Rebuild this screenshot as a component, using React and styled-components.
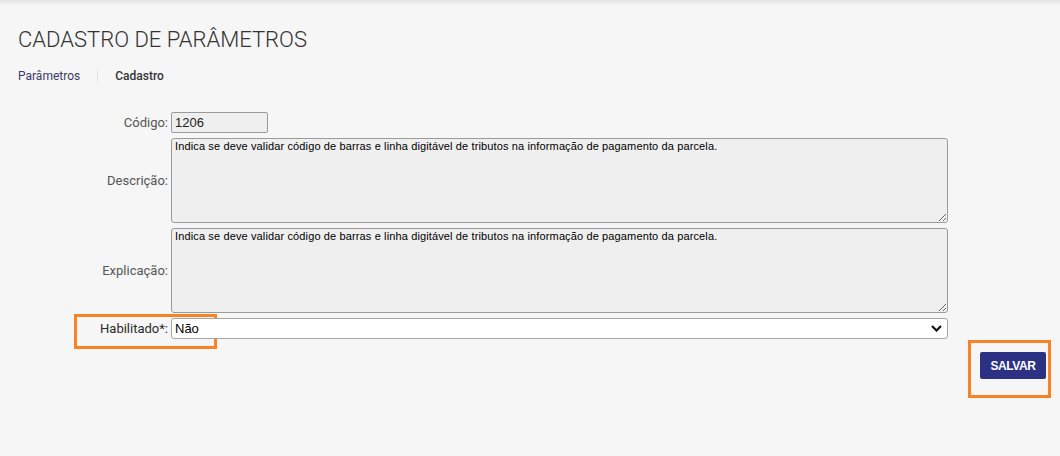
import React, { useState } from 'react';
import styled, { createGlobalStyle } from 'styled-components';

const GlobalStyle = createGlobalStyle`
  html, body {
    margin: 0;
    padding: 0;
    background: #f6f6f6;
  }
  body {
    font-family: Roboto, "Liberation Sans", Arial, sans-serif;
  }
`;

const Page = styled.div`
  min-height: 456px;
  background: #f6f6f6;
  padding: 0 14px 0 18px;
  position: relative;
  box-sizing: border-box;
  &::before {
    content: '';
    position: absolute;
    left: 0;
    right: 0;
    top: 0;
    height: 6px;
    background: linear-gradient(to bottom, rgba(0, 0, 0, 0.07), rgba(0, 0, 0, 0));
  }
`;

const Title = styled.h1`
  margin: 0;
  padding-top: 27px;
  font-family: Roboto, sans-serif;
  font-weight: 300;
  font-size: 22px;
  line-height: 26px;
  color: #333;
`;

const Breadcrumb = styled.nav`
  display: flex;
  align-items: center;
  margin-top: 16px;
  font-size: 12px;
  line-height: 14px;
`;

const Crumb = styled.span`
  color: ${(p) => (p.$active ? '#333' : '#3b3b66')};
  font-weight: ${(p) => (p.$active ? 500 : 400)};
`;

const Separator = styled.span`
  width: 1px;
  height: 10px;
  background: #ddd;
  margin: 0 17px;
`;

const Form = styled.form`
  display: grid;
  grid-template-columns: 150px 777px;
  column-gap: 3px;
  row-gap: 5px;
  margin-top: 29px;
  align-items: center;
`;

const Label = styled.label`
  text-align: right;
  font-size: 13px;
  color: ${(p) => (p.$strong ? '#2a2a2a' : '#555')};
  font-weight: 400;
  position: relative;
`;

const Highlight = styled.span`
  position: absolute;
  border: 3px solid #fb8125;
  pointer-events: none;
  box-sizing: border-box;
`;

const CodeInput = styled.input`
  width: 97px;
  height: 21px;
  box-sizing: border-box;
  border: 1px solid #9a9a9a;
  border-radius: 2px;
  background: #efefef;
  font-family: "Liberation Sans", Arial, sans-serif;
  font-size: 13px;
  color: #222;
  padding: 0 3px;
  margin: 0;
`;

const TextArea = styled.textarea`
  width: 777px;
  height: 85px;
  box-sizing: border-box;
  border: 1px solid #9a9a9a;
  border-radius: 3px;
  background: #efefef;
  font-family: "Liberation Sans", Arial, sans-serif;
  font-size: 11px;
  letter-spacing: 0.13px;
  line-height: 13px;
  color: #000;
  padding: 1px 3px;
  margin: 0;
  display: block;
`;

const SelectWrap = styled.div`
  position: relative;
  width: 777px;
`;

const Select = styled.select`
  appearance: none;
  width: 100%;
  height: 21px;
  box-sizing: border-box;
  border: 1px solid #a5a5a5;
  border-radius: 3px;
  background: #fff;
  font-family: "Liberation Sans", Arial, sans-serif;
  font-size: 13px;
  color: #000;
  padding: 0 3px;
  margin: 0;
  display: block;
`;

const Chevron = styled.svg`
  position: absolute;
  right: 6px;
  top: 7px;
  pointer-events: none;
`;

const Actions = styled.div`
  display: flex;
  justify-content: flex-end;
  margin-top: 13px;
`;

const ButtonSlot = styled.div`
  position: relative;
`;

const SaveButton = styled.button`
  width: 66px;
  height: 27px;
  border: none;
  border-radius: 2px;
  background: #2c3183;
  color: #fff;
  font-family: "Liberation Sans", Arial, sans-serif;
  font-size: 12px;
  font-weight: 700;
  letter-spacing: -0.4px;
  padding: 0;
  cursor: pointer;
`;

const texto =
  'Indica se deve validar código de barras e linha digitável de tributos na informação de pagamento da parcela.';

export default function App() {
  const [habilitado, setHabilitado] = useState('N');

  return (
    <>
      <GlobalStyle />
      <Page>
        <Title>CADASTRO DE PARÂMETROS</Title>
        <Breadcrumb>
          <Crumb>Parâmetros</Crumb>
          <Separator />
          <Crumb $active>Cadastro</Crumb>
        </Breadcrumb>

        <Form onSubmit={(e) => e.preventDefault()}>
          <Label htmlFor="codigo">Código:</Label>
          <CodeInput id="codigo" value="1206" readOnly />

          <Label htmlFor="descricao">Descrição:</Label>
          <TextArea id="descricao" value={texto} readOnly />

          <Label htmlFor="explicacao">Explicação:</Label>
          <TextArea id="explicacao" value={texto} readOnly />

          <Label htmlFor="habilitado" $strong>
            Habilitado*:
            <Highlight style={{ left: 56, top: -7, width: 143, height: 35 }} />
          </Label>
          <SelectWrap>
            <Select id="habilitado" value={habilitado} onChange={(e) => setHabilitado(e.target.value)}>
              <option value="N">Não</option>
              <option value="S">Sim</option>
            </Select>
            <Chevron width="11" height="7" viewBox="0 0 11 7">
              <path d="M1 1 L5.5 5.5 L10 1" fill="none" stroke="#111" strokeWidth="2.2" />
            </Chevron>
          </SelectWrap>
        </Form>

        <Actions>
          <ButtonSlot>
            <SaveButton type="button">SALVAR</SaveButton>
            <Highlight style={{ left: -12, top: -12, width: 83, height: 58 }} />
          </ButtonSlot>
        </Actions>
      </Page>
    </>
  );
}
